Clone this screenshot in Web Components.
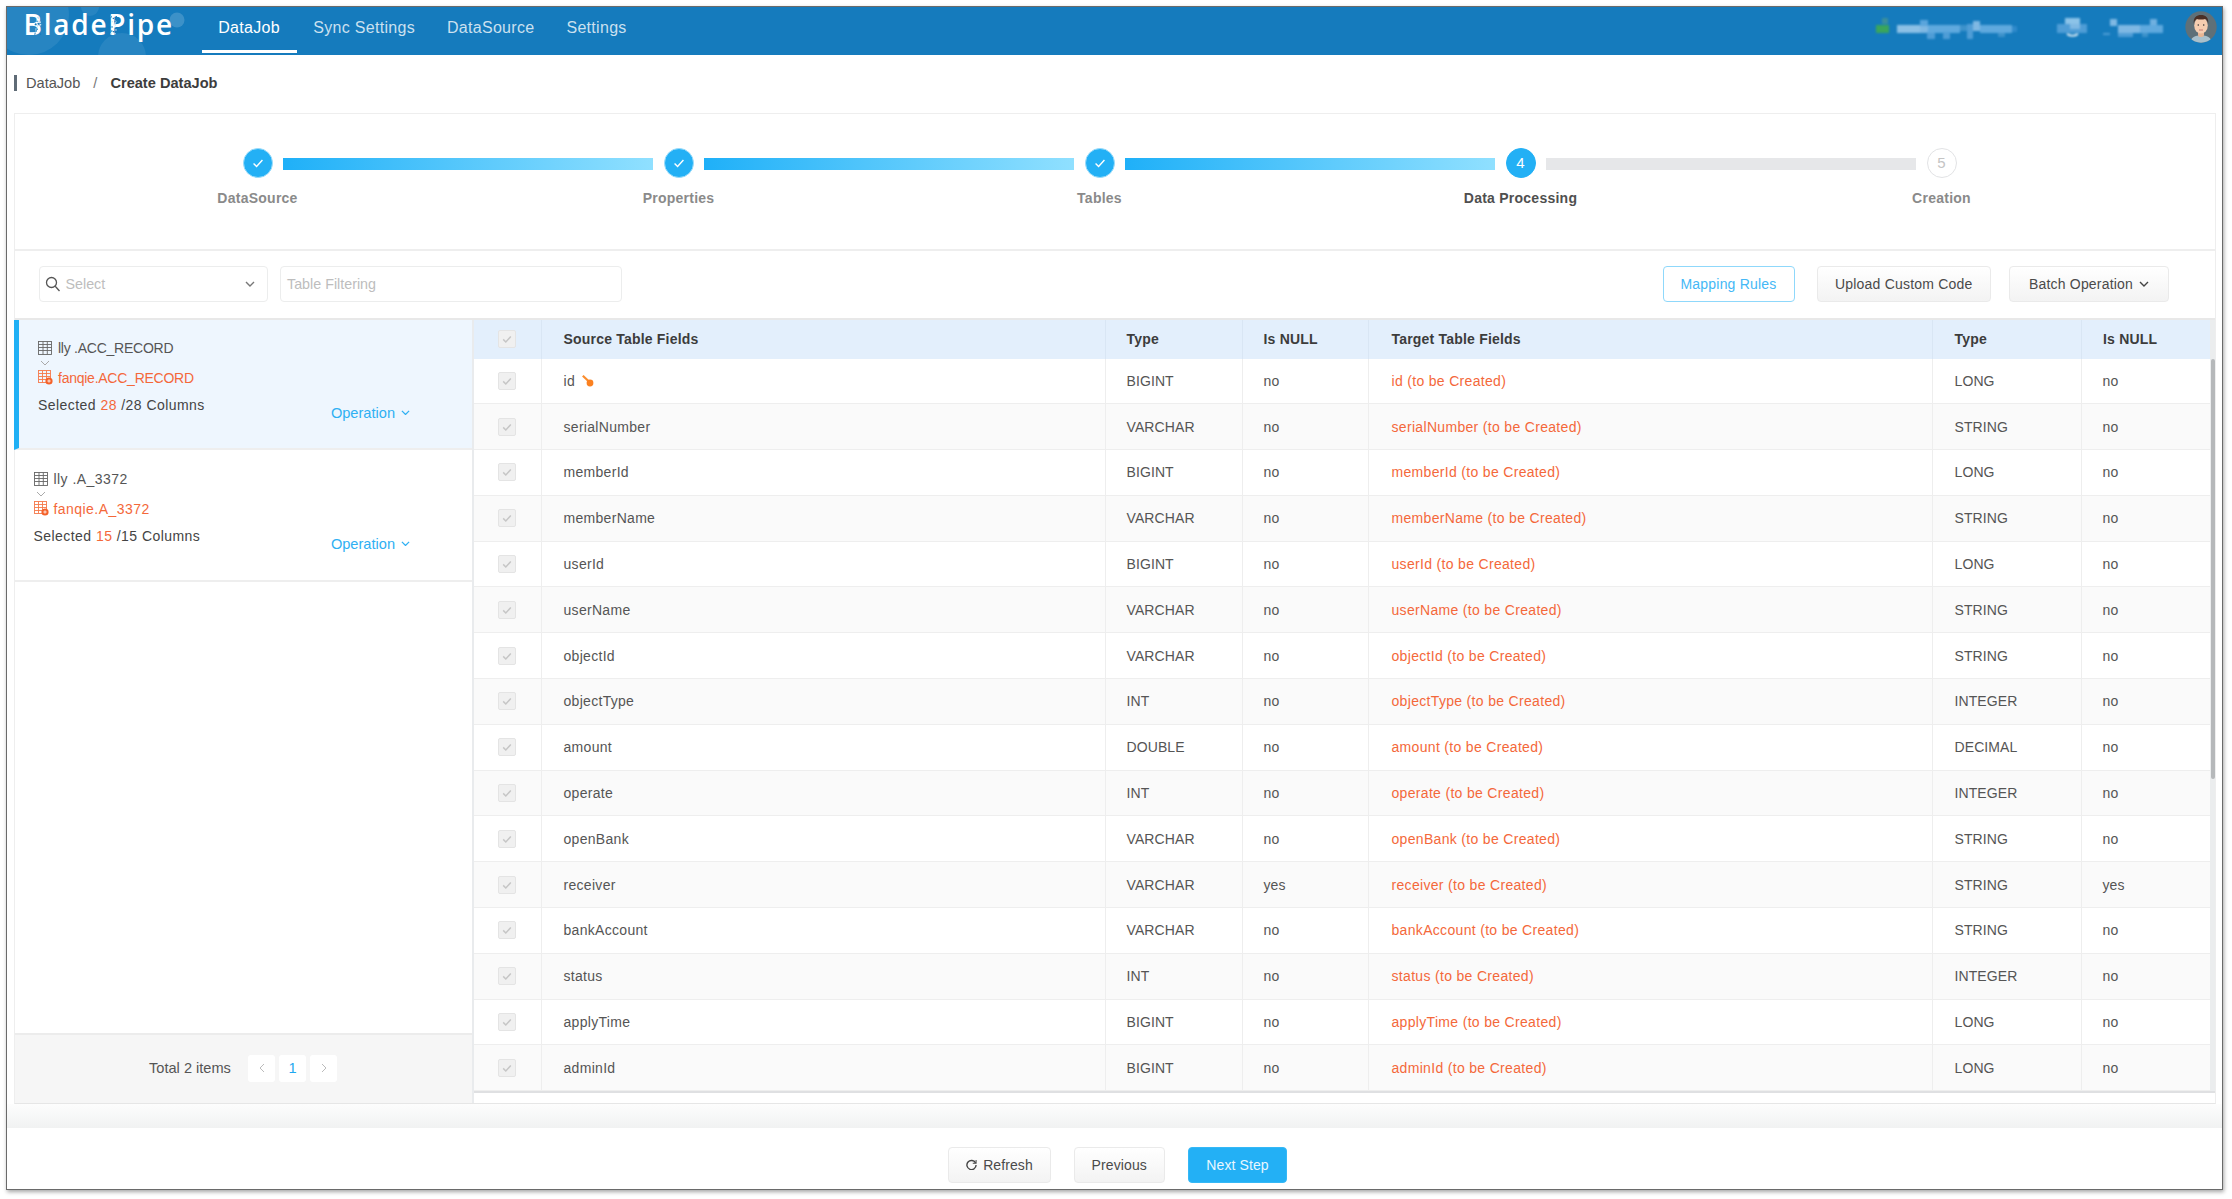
<!DOCTYPE html>
<html><head><meta charset="utf-8">
<style>
html,body{margin:0;background:#fff;height:100%}
body{font-family:"Liberation Sans",Arial,sans-serif;color:#555;padding:6px 0 0 6px;box-sizing:border-box;height:1199px;overflow:hidden}
</style></head><body>
<app-window></app-window>
<script>
const chev=(w,c,sw=1.4)=>`<svg width="${w}" height="${w*.6}" viewBox="0 0 10 6" fill="none" stroke="${c}" stroke-width="${sw}"><path d="M1 1l4 4 4-4"/></svg>`;
const check=(w,c,sw=1.6)=>`<svg width="${w}" height="${w}" viewBox="0 0 12 12" fill="none" stroke="${c}" stroke-width="${sw}"><path d="M2.2 6.4l2.6 2.6 5-5.6"/></svg>`;
function def(name,css,html){
  class C extends HTMLElement{
    constructor(){super();const r=this.attachShadow({mode:'open'});r.innerHTML=`<style>${css}</style>`+(typeof html==='function'?'':html);}
    connectedCallback(){if(typeof html==='function'){this.shadowRoot.innerHTML=`<style>${css}</style>`+html(this);}}
  }
  customElements.define(name,C);
}
const specks=(x0,w,seed)=>{let s=seed,o='';const rnd=()=>(s=(s*9301+49297)%233280)/233280;for(let i=0;i<26;i++){const x=x0+rnd()*w,y=8+rnd()*20;o+=`<rect x="${x.toFixed(1)}" y="${y.toFixed(1)}" width="1.300" height="1.300" fill="${rnd()>.5?'#157bbd':'#cfe6f6'}"/>`;}return o;};

def('app-nav',`
:host{display:flex;align-items:stretch;height:48px;background:#157bbd;color:#fff;position:relative;flex:none}
.deco{position:absolute;left:0;top:0;width:190px;height:48px;pointer-events:none}
.logo{position:relative;width:194.500px;padding-left:16.500px;box-sizing:border-box;font:600 28px/35px "Open Sans",sans-serif;letter-spacing:1.750px;white-space:nowrap;flex:none}
.spk{position:absolute;left:0;top:0;width:190px;height:48px}
nav{display:flex;position:relative}
a{display:flex;align-items:center;padding:0 16px 5px;font-size:16px;letter-spacing:.3px;color:rgba(255,255,255,.78);height:46px;box-sizing:border-box}
a.on{color:#fff;border-bottom:3px solid #fff;padding:0 16.750px 2px}
a.on + a{margin-left:.5px}
.right{margin-left:auto;display:flex;align-items:flex-start;padding:4px 5.500px 0 0;position:relative}
.ava{margin-left:21.500px;display:block}
`,`
<svg class="deco" viewBox="0 0 190 48"><g fill="#fff" fill-opacity=".08"><circle cx="22" cy="8" r="40"/><circle cx="115" cy="50" r="24"/><circle cx="83" cy="0" r="9"/><circle cx="170" cy="13" r="7.500" fill-opacity=".17"/></g></svg>
<div class="logo">BladePipe<svg class="spk" viewBox="0 0 190 48">${specks(27,6,7)}${specks(100,9,91)}</svg></div>
<nav><a class="on">DataJob</a><a>Sync Settings</a><a>DataSource</a><a>Settings</a></nav>
<div class="right">
<svg width="287" height="32" viewBox="0 0 287 32" style="filter:blur(.9px)">
<rect x="6" y="7" width="6" height="6" fill="#3a8f9c"/><rect x="0" y="14" width="13" height="8" fill="#3aa55c"/>
<rect x="21" y="14" width="23" height="8" fill="#8cc0e5"/><rect x="44" y="9" width="8" height="6" fill="#5aa5dc"/><rect x="44" y="15" width="8" height="7" fill="#7fb8e3"/><rect x="51" y="21" width="8" height="7" fill="#4f9dd6"/><rect x="52" y="14" width="32" height="8" fill="#5fa9de"/><rect x="67" y="21" width="7" height="7" fill="#4f9dd6"/><rect x="84" y="14" width="7" height="6" fill="#3d92cb"/><rect x="91" y="13" width="6" height="15" fill="#4f9dd6"/><rect x="97" y="10" width="7" height="10" fill="#7fb8e3"/><rect x="104" y="14" width="32" height="8" fill="#5fa9de"/><rect x="122" y="22" width="7" height="4" fill="#3d92cb"/><rect x="136" y="15" width="5" height="6" fill="#2f8acb"/>
<rect x="189" y="7" width="15" height="6" fill="#8cc3e8"/><rect x="181" y="13" width="30" height="9" fill="#4f9dd6"/><rect x="194" y="13" width="10" height="5" fill="#7fb8e3"/><path d="M191 23q5.500 3.500 11 0" stroke="#fff" stroke-width="1.600" fill="none"/>
<rect x="234" y="8" width="7" height="7" fill="#7fb8e3"/><rect x="227" y="22" width="7" height="2" fill="#4f9dd6"/><rect x="242" y="14" width="22" height="8" fill="#7fb8e3"/><rect x="242" y="22" width="15" height="4" fill="#4f9dd6"/><rect x="274" y="8" width="7" height="7" fill="#6fb0e0"/><rect x="264" y="14" width="23" height="8" fill="#5fa9de"/><rect x="266" y="22" width="6" height="4" fill="#3d92cb"/>
</svg>
<svg class="ava" width="32" height="32" viewBox="0 0 32 32"><defs><clipPath id="c"><circle cx="16" cy="16" r="15.700"/></clipPath></defs><g clip-path="url(#c)"><rect width="32" height="32" fill="#5f7078"/><path d="M5 32c1-6 5-7.500 11-7.500S26 26 27 32z" fill="#a9c0cc"/><rect x="13" y="20" width="6" height="6" rx="2" fill="#e8b594"/><ellipse cx="16" cy="14.500" rx="6.800" ry="8" fill="#f6cdb0"/><path d="M8.800 13c-.8-7 3-9 7.200-9s8 2 7.200 9c-.6-3-1.500-4.500-3-5-2.500.8-6 .8-8.500 0-1.500.8-2.400 2-2.900 5z" fill="#4a2f26"/><circle cx="13.300" cy="14" r=".8" fill="#333"/><circle cx="18.700" cy="14" r=".8" fill="#333"/><path d="M14 19h4" stroke="#b66" stroke-width=".8"/></g></svg>
</div>`);

def('bread-crumb',`
:host{display:flex;align-items:center;height:57.500px;box-sizing:border-box;padding:0 0 1.500px 7px;font-size:14.600px;flex:none}
i{width:3px;height:16px;background:#5f6b76;margin-right:9px}
b{color:#3d3d3d}
span{color:#555}
em{font-style:normal;color:#777;margin:0 13px 0 13px}
`,`<i></i><span>DataJob</span><em>/</em><b>Create DataJob</b>`);

def('step-item',`
:host{display:flex;flex-direction:column;align-items:center;width:30px;position:relative;flex:none}
.c{width:30px;height:30px;border-radius:50%;box-sizing:border-box;display:flex;align-items:center;justify-content:center;font-size:15px;background:#23b0f5;color:#fff;border:1.500px solid #9adcfb}
:host([state=todo]) .c{background:#fff;color:#c4c4c4;border:1.500px solid #e2e3e5}
:host([state=now]) .c{border-color:#23b0f5}
.l{margin-top:12px;font-size:14px;font-weight:700;letter-spacing:.25px;color:#8a8a8a;white-space:nowrap;line-height:16px}
:host([state=now]) .l{color:#4f4f4f}
`,t=>`<div class="c">${t.getAttribute('state')==='done'?check(14,'#fff',1.2):(t.getAttribute('num')||'')}</div><div class="l">${t.getAttribute('label')}</div>`);

def('step-bar',`
:host{display:block;flex:none;width:370px;height:12px;margin:10px 11px 0 10px;background:linear-gradient(90deg,#1fb0f8,#90e0ff)}
:host([todo]){background:#e6e7e9}
`,``);

def('step-flow',`
:host{display:flex;justify-content:flex-start;padding:34px 0 0 227.500px;height:137px;box-sizing:border-box;border-bottom:2px solid #eeeeee;flex:none}
`,`<slot></slot>`);

def('tool-bar',`
:host{display:flex;align-items:center;height:69px;padding:0 46px 0 23.500px;box-sizing:border-box;flex:none;gap:12px;border-bottom:2px solid #e8e8e8;font-size:14.300px}
.sel,.inp{height:36px;box-sizing:border-box;border:1.500px solid #eceded;border-radius:4px;display:flex;align-items:center;color:#bdbdbd}
.sel{width:229px;padding:0 11.500px 0 5px}
.sel span{margin-left:5px;flex:1}
.inp{width:342px;padding-left:6.500px}
.sp{flex:1}
.btn{height:36px;box-sizing:border-box;border-radius:4px;display:flex;align-items:center;justify-content:center;border:1.500px solid #eaeaea;background:linear-gradient(#fff,#f3f3f3);color:#4a4a4a;font-size:14px;letter-spacing:.2px}
.m{width:132px;color:#44b8f6;background:#fff;border-color:#8fd8fb;margin-right:10.500px}
.u{width:173.500px;margin-right:6.500px}
.b{width:160px;gap:6px}
`,`
<div class="sel"><svg width="16" height="16" viewBox="0 0 16 16" fill="none" stroke="#555" stroke-width="1.300"><circle cx="6.500" cy="6.500" r="5"/><path d="M10.200 10.200L14.500 15"/></svg><span>Select</span>${chev(10,'#777')}</div>
<div class="inp">Table Filtering</div><div class="sp"></div>
<div class="btn m">Mapping Rules</div><div class="btn u">Upload Custom Code</div><div class="btn b">Batch Operation ${chev(10,'#444')}</div>`);

const tableIcon=c=>`<svg width="14" height="14" viewBox="0 0 14 14" fill="none" stroke="${c}" stroke-width=".9"><rect x=".5" y=".5" width="13" height="13"/><path d="M.5 3.500h13M.5 6.500h13M.5 9.500h13M5 .5v13M9.300 .5v13" /></svg>`;
const tableNew=`<svg width="15" height="15" viewBox="0 0 15 15" fill="none" stroke="#f5794a" stroke-width=".9" style="margin-right:-1px"><rect x=".5" y=".5" width="12" height="12"/><path d="M.5 3.500h12M.5 6.500h12M.5 9.500h12M4.500 .5v12M8.500 .5v12"/><circle cx="11" cy="11" r="3.600" fill="#f4622a" stroke="none"/><path d="M9.300 11h3.400M11 9.300v3.400" stroke="#fff" stroke-width=".8"/></svg>`;

def('list-item',`
:host{display:block;height:132px;box-sizing:border-box;border-bottom:2px solid #eeeeee;position:relative;font-size:14px;padding:20px 0 0 18.500px}
:host([selected]){background:#eef6fe;border-left:5px solid #1fb0f5;margin-left:-1.500px;padding:19px 0 0 19.500px;height:130px}
.r{display:flex;align-items:center;gap:6px;height:18px;white-space:nowrap;color:#555}
.d{height:12px;padding-left:2px;display:flex;align-items:center}
.t{color:#f4683a}
.s{margin-top:9px;color:#444;line-height:18px;font-size:14px;letter-spacing:.45px}
.s b{font-weight:400;color:#f4683a}
.op{position:absolute;right:62px;top:86px;color:#2fb0f3;display:flex;align-items:center;gap:6px;font-size:14.600px}
:host([selected]) .op{top:85px}
`,t=>`<div class="r">${tableIcon('#666')}<span style="letter-spacing:${t.getAttribute('ls')}px">${t.getAttribute('src')}</span></div><div class="d">${chev(10,'#aaa',1)}</div><div class="r t">${tableNew}<span style="letter-spacing:${t.getAttribute('ls')}px">${t.getAttribute('dst')}</span></div><div class="s">Selected <b>${t.getAttribute('n')}</b> /${t.getAttribute('n')} Columns</div><div class="op">Operation ${chev(9,'#2fb0f3')}</div>`);

def('list-pager',`
:host{display:flex;align-items:center;height:70px;background:#f6f6f6;border-top:2px solid #ececec;box-sizing:border-box;padding:0 0 2px 134px;flex:none;font-size:14.600px;color:#555}
span{margin-right:17px}
u{text-decoration:none;width:27.500px;height:27px;background:#fff;border-radius:3px;margin-right:3.500px;display:flex;align-items:center;justify-content:center;color:#1fa8f0}
`,`<span>Total 2 items</span><u><svg width="6" height="10" viewBox="0 0 6 10" fill="none" stroke="#bbb"><path d="M5 1L1 5l4 4"/></svg></u><u>1</u><u><svg width="6" height="10" viewBox="0 0 6 10" fill="none" stroke="#bbb"><path d="M1 1l4 4-4 4"/></svg></u>`);

def('side-list',`
:host{display:flex;flex-direction:column;width:459px;flex:none;border-right:2px solid #e9ebed;box-sizing:border-box}
.list{flex:1}
`,`<div class="list"><slot></slot></div><list-pager></list-pager>`);

const cols='68px 564px 137px 126px 564px 149px 126px';
def('check-box',`
:host{display:inline-flex;width:18px;height:18px;box-sizing:border-box;border:1px solid #e4e4e4;background:#f0f0f0;border-radius:2px;align-items:center;justify-content:center}
`,check(12,'#c6c6c6',1.5));
const key=`<svg width="12" height="12" viewBox="0 0 12 12" style="margin-left:7px;vertical-align:-1px"><path d="M.8 .8l6.400 6" stroke="#fb8d2e" stroke-width="2.200" fill="none"/><circle cx="8" cy="8" r="3.400" fill="#fb8120"/></svg>`;
def('table-row',`
:host{display:grid;grid-template-columns:${cols};height:45.800px;box-sizing:border-box;border-bottom:1px solid #eee;font-size:14px;color:#555;background:#fff}
:host(:nth-child(even)){background:#fafafa}
div{display:flex;align-items:center;padding-left:20.500px;border-right:1px solid #eee;box-sizing:border-box;white-space:nowrap;letter-spacing:.1px}
div:first-of-type{padding-left:24px}
div:last-child{border-right:0}
.nm{letter-spacing:.3px;padding-left:21.500px}
.t{color:#f4683a;letter-spacing:.32px;padding-left:22.500px}
.y{padding-left:21.500px}
`,t=>{const [a,b,c,d]=t.getAttribute('d').split('|');return `<div><check-box></check-box></div><div class="nm">${a}${t.hasAttribute('pk')?key:''}</div><div>${b}</div><div>${c}</div><div class="t">${a} (to be Created)</div><div class="y">${d}</div><div>${c}</div>`;});
def('table-head',`
:host{display:grid;grid-template-columns:${cols};height:39px;box-sizing:border-box;font-size:14px;background:#e3effc;color:#3c3c3c;font-weight:700}
div{display:flex;align-items:center;padding-left:20.500px;border-right:1px solid #d9e6f4;box-sizing:border-box;white-space:nowrap;letter-spacing:.2px}
div:first-of-type{padding-left:24px}
div:nth-of-type(2){padding-left:21.500px}
div:nth-of-type(5){padding-left:22.500px}
div:nth-of-type(6){padding-left:21.500px}
div:last-child{border-right:0;padding-left:21px}
`,`<div><check-box></check-box></div><div>Source Table Fields</div><div>Type</div><div>Is NULL</div><div>Target Table Fields</div><div>Type</div><div>Is NULL</div>`);

def('data-table',`
:host{display:block;flex:1;min-width:0;position:relative;box-sizing:border-box;background:#fff}
.wrap{background:#ebedee;padding-right:5px;border-bottom:2px solid #dfe0e2;position:relative;box-sizing:border-box;height:773.800px;overflow:hidden}
.bar{position:absolute;right:.5px;top:39px;width:4px;height:420px;background:#b5b8ba;border-radius:2px}
.in{background:#fff}
`,`<div class="wrap"><div class="in"><table-head></table-head><slot></slot></div><div class="bar"></div></div>`);

def('content-card',`
:host{display:flex;flex-direction:column;border:1.500px solid #eeeeee;border-bottom-color:#e6e6e6;margin:0 6px 0 7px;flex:none;height:991.500px;box-sizing:border-box}
.b{display:flex;flex:1;min-height:0}
`,`<slot name="steps"></slot><slot name="tools"></slot><div class="b"><slot name="list"></slot><slot name="table"></slot></div>`);

def('action-bar',`
:host{display:flex;flex:1;justify-content:center;padding:42.500px 0 0 6px;box-sizing:border-box;font-size:14px;background:linear-gradient(#fdfdfd,#f1f2f2) 0 0/100% 24px no-repeat}
.btn{height:36px;box-sizing:border-box;border-radius:4px;display:flex;align-items:center;justify-content:center;border:1.500px solid #eaeaea;background:linear-gradient(#fff,#f3f3f3);color:#4a4a4a;letter-spacing:.1px;gap:6px}
.a{width:103px;margin-right:22.500px}.p{width:91.500px;margin-right:23px}.n{width:99px;background:#23b0f5;border-color:#35b8f6;color:#e8f7ff}
`,`<div class="btn a"><svg width="11" height="11" viewBox="0 0 12 12" fill="none" stroke="#444" stroke-width="1.500"><path d="M10.400 4.200A5 5 0 1 0 11 6.500"/><path d="M11 1v3.600H7.400" stroke-width="1.100"/></svg>Refresh</div><div class="btn p">Previous</div><div class="btn n">Next Step</div>`);

def('app-window',`
:host{display:flex;flex-direction:column;width:2217px;height:1184px;box-sizing:border-box;background:#fff;border:1.500px solid #6a6a6a;box-shadow:1px 2px 4px rgba(0,0,0,.35);overflow:hidden}
`,`<app-nav></app-nav><bread-crumb></bread-crumb>
<content-card>
<step-flow slot="steps">
<step-item state="done" label="DataSource"></step-item><step-bar></step-bar>
<step-item state="done" label="Properties"></step-item><step-bar></step-bar>
<step-item state="done" label="Tables"></step-item><step-bar></step-bar>
<step-item state="now" num="4" label="Data Processing"></step-item><step-bar todo></step-bar>
<step-item state="todo" num="5" label="Creation"></step-item>
</step-flow>
<tool-bar slot="tools"></tool-bar>
<side-list slot="list">
<list-item selected ls="-.25" src="lly .ACC_RECORD" dst="fanqie.ACC_RECORD" n="28"></list-item>
<list-item ls=".45" src="lly .A_3372" dst="fanqie.A_3372" n="15"></list-item>
</side-list>
<data-table slot="table">
${[['id','BIGINT','no','LONG'],['serialNumber','VARCHAR','no','STRING'],['memberId','BIGINT','no','LONG'],['memberName','VARCHAR','no','STRING'],['userId','BIGINT','no','LONG'],['userName','VARCHAR','no','STRING'],['objectId','VARCHAR','no','STRING'],['objectType','INT','no','INTEGER'],['amount','DOUBLE','no','DECIMAL'],['operate','INT','no','INTEGER'],['openBank','VARCHAR','no','STRING'],['receiver','VARCHAR','yes','STRING'],['bankAccount','VARCHAR','no','STRING'],['status','INT','no','INTEGER'],['applyTime','BIGINT','no','LONG'],['adminId','BIGINT','no','LONG']].map((r,i)=>`<table-row ${i==0?'pk':''} d="${r.join('|')}"></table-row>`).join('')}
</data-table>
</content-card>
<action-bar></action-bar>`);
</script>
</body></html>
